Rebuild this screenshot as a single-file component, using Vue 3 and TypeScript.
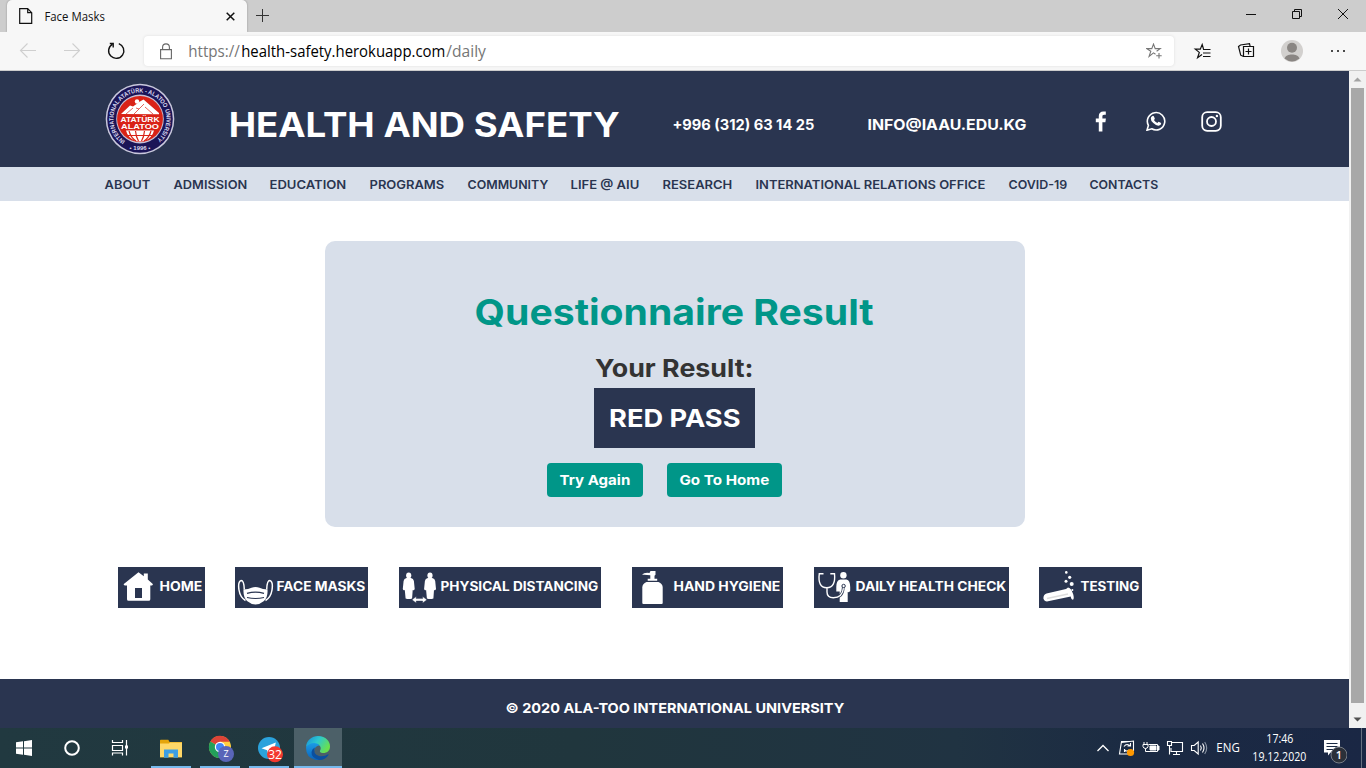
<script setup lang="ts">
import { h } from 'vue'

interface LabelProps {
  text: string
  w: number
  cap: number
  weight?: number
  ui?: boolean
}

// One-line label whose box is exactly as wide as its ink and as tall as its capitals.
const Label = (p: LabelProps) => {
  const size = p.cap / (p.ui ? 0.714 : 0.727)
  const side = size * (p.ui ? 0.05 : 0.04)
  return h('svg', { class: 'label', width: p.w, height: p.cap }, [
    h('text', {
      x: -side,
      y: p.cap,
      textLength: p.w + side * 1.5,
      lengthAdjust: 'spacingAndGlyphs',
      'font-size': size,
      'font-weight': p.weight ?? (p.ui ? 400 : 700),
      'font-family': p.ui ? '"Open Sans", "Noto Sans", sans-serif' : 'Inter, "Open Sans", sans-serif',
    }, p.text),
  ])
}
Label.props = { text: String, w: Number, cap: Number, weight: Number, ui: Boolean }

const nav: { text: string; w: number }[] = [
  { text: 'ABOUT', w: 45 },
  { text: 'ADMISSION', w: 73 },
  { text: 'EDUCATION', w: 76 },
  { text: 'PROGRAMS', w: 74 },
  { text: 'COMMUNITY', w: 80 },
  { text: 'LIFE @ AIU', w: 68 },
  { text: 'RESEARCH', w: 69 },
  { text: 'INTERNATIONAL RELATIONS OFFICE', w: 229 },
  { text: 'COVID-19', w: 58 },
  { text: 'CONTACTS', w: 68 },
]

const tiles: { id: string; text: string; w: number }[] = [
  { id: 'home', text: 'HOME', w: 42 },
  { id: 'mask', text: 'FACE MASKS', w: 88 },
  { id: 'distance', text: 'PHYSICAL DISTANCING', w: 157 },
  { id: 'hand', text: 'HAND HYGIENE', w: 106 },
  { id: 'daily', text: 'DAILY HEALTH CHECK', w: 150 },
  { id: 'test', text: 'TESTING', w: 58 },
]
</script>

<template>
  <div class="screen">
    <div class="tabstrip">
      <div class="tab">
        <svg class="doc" width="14" height="16" viewBox="0 0 14 16" fill="none" stroke="#111" stroke-width="1.2"><path d="M.7.7h8l4 4v10.6H.7zM8.7.7v4h4" /></svg>
        <Label text="Face Masks" :w="59.5" :cap="8.6" ui />
        <svg class="tabclose" width="9" height="9" viewBox="0 0 9 9" stroke="#111" stroke-width="1.5"><path d="M.7.7l7.6 7.6M8.3.7L.7 8.3" /></svg>
      </div>
      <svg class="plus" width="13" height="13" viewBox="0 0 13 13" stroke="#333"><path d="M6.5 0v13M0 6.5h13" /></svg>
      <div class="winctl">
        <svg width="46" height="30" viewBox="0 0 46 30" stroke="#111" fill="none"><path d="M18 14.5h10" /></svg>
        <svg width="46" height="30" viewBox="0 0 46 30" stroke="#111" fill="none"><path d="M18.500 11.500h7v7h-7zM20.500 11.500v-2h7v7h-2" /></svg>
        <svg width="46" height="30" viewBox="0 0 46 30" stroke="#111" fill="none"><path d="M18 9l10 10M28 9L18 19" /></svg>
      </div>
    </div>

    <div class="toolbar">
      <svg class="navs" width="144" height="38" viewBox="0 0 144 38" fill="none">
        <g stroke="#cfcfcf" stroke-width="1.1"><path d="M20.500 18.500h15.500M27.500 11.500l-7 7 7 7" /><path d="M64 18.500h15.500M72.500 11.500l7 7-7 7" /></g>
        <path d="M112.200 12.300a7.600 7.600 0 1 0 6.600-.7M109.800 11.500h3.400v4" stroke="#111" stroke-width="1.4" />
      </svg>
      <div class="address">
        <svg class="lock" width="12" height="17" viewBox="0 0 12 17" fill="none" stroke="#666" stroke-width="1.1"><path d="M.6 6.600h10.800v9.200H.6zM2.600 6.600V4.300a3.400 3.400 0 0 1 6.800 0v2.300" /></svg>
        <div class="url">
          <Label class="dim" text="https://" :w="50.500" :cap="11.300" ui />
          <Label text="health-safety.herokuapp.com" :w="203" :cap="11.300" ui />
          <Label class="dim" text="/daily" :w="38.500" :cap="11.300" ui />
        </div>
        <svg class="fav" width="17" height="16" viewBox="0 0 17 16" fill="none" stroke="#777" stroke-width="1.1"><path d="M9.500 11.200l-2-1.300-4.400 3.500 1.700-5.200L.8 5.600h5l1.700-4.500 1.700 4.500h5l-3.600 2.600M13 10v5.500M10.200 12.700h5.500" /></svg>
      </div>
      <svg class="tools" width="192" height="38" viewBox="0 0 192 38" fill="none" stroke="#111">
        <path d="M29.500 17l-1.300-4.500-1.900 4.700h-5l4 3.200-1.700 5.300 4.400-3.200M29 17.500h7.500M29 21h7.500M29 24.500h7.500" stroke-width="1.200" />
        <path d="M69.500 24.500l-2.800-1.300-2.200-8.700 2-1.500 9-1.300.7 3M69.500 14.500h10v10h-10zM74.500 16.500v6M71.500 19.500h6" stroke-width="1.200" />
        <circle cx="118" cy="19" r="11" fill="#d2d0ce" stroke="none" />
        <circle cx="118" cy="15.800" r="5" fill="#8a8683" stroke="none" />
        <path d="M110.500 26.500c1.500-5.500 13.500-5.500 15 0q-7.500 6-15 0z" fill="#8a8683" stroke="none" />
        <g fill="#111" stroke="none"><circle cx="158" cy="19" r="1" /><circle cx="164" cy="19" r="1" /><circle cx="170" cy="19" r="1" /></g>
      </svg>
    </div>

    <div class="viewport">
      <div class="page">
        <header>
          <svg class="seal" width="70" height="72" viewBox="-35 -36 70 72">
            <ellipse rx="34.300" ry="35.200" fill="#c9c8dc" />
            <ellipse rx="32.800" ry="33.700" fill="#1b1557" />
            <ellipse rx="23.800" ry="24.400" fill="#c8c0d4" />
            <circle r="22.900" fill="#d92216" />
            <path id="ring" d="M-14 22.500A26.500 26.500 0 1 1 14 22.500" fill="none" />
            <text class="ringtext" font-size="6.200"><textPath href="#ring" textLength="132" lengthAdjust="spacingAndGlyphs" startOffset="1">INTERNATIONAL ATATÜRK - ALATOO UNIVERSITY</textPath></text>
            <text class="ringtext" x="0" y="31.200" font-size="6" text-anchor="middle">• 1996 •</text>
            <g fill="#fff">
              <circle cx="-3" cy="-17.500" r="2.200" />
              <path d="M-19-5l9-8.500 3 1 7-5 3.500-2L19-6v1.200zM-14 11.500h28q-2 7.500-9 10-5 2-10 0-7-2.500-9-10" />
              <text class="sealtext" x="-19.500" y="2.700" textLength="39" lengthAdjust="spacingAndGlyphs" font-size="7.800">ATATÜRK</text>
              <text class="sealtext" x="-19" y="10.300" textLength="38" lengthAdjust="spacingAndGlyphs" font-size="7.800">ALATOO</text>
            </g>
            <path d="M-11 12q2 7 7 10M-4.500 12q.5 6 3 10M4.500 12q-.5 6-3 10M11 12q-2 7-7 10M-12 16.500h24" stroke="#d92216" stroke-width="1.200" fill="none" />
            <path d="M-14-5l7-6M-6-5l10-10M-4-11l3 1M5-12l8 7" stroke="#d92216" stroke-width=".7" />
          </svg>
          <Label class="brand" text="HEALTH AND SAFETY" :w="389" :cap="24.500" />
          <Label class="phone" text="+996 (312) 63 14 25" :w="141" :cap="10.500" />
          <Label class="mail" text="INFO@IAAU.EDU.KG" :w="158" :cap="10.500" />
          <div class="social">
            <svg width="12" height="21" viewBox="0 0 12 21" fill="#fff"><path d="M3.800 20.500v-9.300H.8V7.600h3V4.900C3.800 1.900 5.600.4 8.300.4h2.500v3.300H9.100C7.800 3.700 7.400 4.400 7.400 5.500v2.100h3.500l-.5 3.600h-3v9.300z" /></svg>
            <svg width="20" height="20" viewBox="0 0 20 20"><path d="M1 19.200l1.400-4.800A8.700 8.700 0 1 1 5.700 17.800z" fill="none" stroke="#fff" stroke-width="1.600" /><path d="M6.100 5.200q1-.8 1.700 0l1 2.200q.1.500-.9 1.600 1.300 2.200 3.500 3.100 1-1.300 1.300-1.300l2.400 1.200q.3 2.200-2.600 2.700-2.300.1-5.200-2.600-2.800-2.700-2.500-4.800.2-1.400 1.300-2.100z" fill="#fff" /></svg>
            <svg width="21" height="21" viewBox="0 0 21 21" fill="none" stroke="#fff" stroke-width="1.800"><rect x="1.200" y="1.200" width="18.600" height="18.600" rx="5" /><circle cx="10.500" cy="10.500" r="4.500" /><circle cx="15.900" cy="5" r="1.200" fill="#fff" stroke="none" /></svg>
          </div>
        </header>
        <nav>
          <Label v-for="n in nav" :key="n.text" :text="n.text" :w="n.w" :cap="8.700" :weight="600" />
        </nav>
        <main>
          <section class="card">
            <Label class="title" text="Questionnaire Result" :w="397" :cap="26" :weight="650" />
            <Label class="sub" text="Your Result:" :w="157" :cap="18" :weight="650" />
            <div class="pass"><Label text="RED PASS" :w="130" :cap="18" /></div>
            <div class="actions">
              <a class="btn again"><Label text="Try Again" :w="70" :cap="10" /></a>
              <a class="btn go"><Label text="Go To Home" :w="89" :cap="10" /></a>
            </div>
          </section>
          <div class="tiles">
            <a v-for="t in tiles" :key="t.id" class="tile">
              <svg width="42" height="41" viewBox="0 0 42 41" fill="#fff">
                <template v-if="t.id === 'home'">
                  <path d="M5.800 17L20.500 5.200l5.300 4V6.400h4v6L34.800 17q.4 1.200-1 1.600h-1.500v13.600q0 1.600-1.600 1.600H10.600Q9 33.800 9 32.200V18.600H7Q5.200 18.300 5.800 17z" />
                  <path d="M17 21h7v10h-7z" fill="#2a3550" />
                </template>
                <template v-else-if="t.id === 'mask'">
                  <path d="M9.300 22.500Q9 13.600 6.200 13.600 2.700 14.500 4 23q1.200 7.500 6.500 10.500M31.700 22.500q.3-8.900 3.100-8.900Q38.300 14.500 37 23q-1.200 7.500-6.500 10.500" fill="none" stroke="#fff" stroke-width="1.500" />
                  <path d="M8.500 22.500q5-.2 8-1.700 4-1.500 8 0 3 1.500 8 1.700.6 7.500-3.500 11.500-8.500 7-17 0-4-4-3.500-11.500z" />
                  <path d="M12 26.300q8.500-2.200 17 0M12 30.500q8.500 2 17 0" fill="none" stroke="#2a3550" stroke-width="1.200" />
                </template>
                <template v-else-if="t.id === 'distance'">
                  <g v-for="x in [0, 21.300]" :key="x" :transform="`translate(${x} 0)`">
                    <ellipse cx="9.700" cy="8.500" rx="2.600" ry="3" />
                    <path d="M7.500 11h4.400q2.600.6 3 3l.8 8q-.7 1.800-2 1l-.6 8.400q-3.400 1.400-6.500 0L5.800 23q-1.400.8-2-1l.8-8q.4-2.400 2.900-3z" />
                  </g>
                  <path d="M13 32.800l4.200-3.200v2h6.500v-2l4.200 3.200-4.200 3.200v-2h-6.500v2z" stroke="#2a3550" stroke-width=".4" />
                </template>
                <template v-else-if="t.id === 'hand'">
                  <path d="M10 7.800Q12 5.300 17.500 6l1-2h5v3.800l-1 1v3h2.700v2h-9.500v-2h2.600V8.300Q13 7.300 10 7.800z" />
                  <path d="M14.500 15h12q4.200 1.600 4.200 5.500V36q0 .9-1 .9H11.300q-1 0-1-.9V20.500q0-3.900 4.200-5.500z" />
                </template>
                <template v-else-if="t.id === 'daily'">
                  <circle cx="29.400" cy="8.200" r="3.200" />
                  <path d="M26.200 12.400h6.300q3.700.8 3.700 7.600v4q-.8 1.500-2.500 1v10h-8V24.500h-3.400V20q0-6.800 3.900-7.600z" />
                  <path d="M13 20.500V25q0 5.700 6.300 5.700 10 0 10-11" fill="none" stroke="#2a3550" stroke-width="2.600" />
                  <path d="M9.500 6.700H5.300Q3.500 20.500 12.700 20.700 21.900 20.500 20.500 6.700h-4.200M13 20.500V25q0 5.700 6.300 5.700 9.200 0 10.200-10" fill="none" stroke="#fff" stroke-width="1.400" />
                  <circle cx="29.600" cy="19" r="1.700" stroke="#2a3550" stroke-width="1" />
                </template>
                <template v-else>
                  <path d="M7.500 26.600L27 21.900l2-1.500q3 0 5.200 6.800 1.200 4.300-.2 5.600-1.700 0-2.300-3.300L9 34.300q-3.500.6-4.600-2.800Q4.300 27.800 7.500 26.600z" />
                  <path d="M8 31.500l21-4.600" stroke="#ddd" stroke-width="1.500" />
                  <circle cx="27.300" cy="5.400" r="1.300" /><circle cx="30.700" cy="10.300" r="1.600" /><circle cx="27" cy="14.300" r="1.500" /><circle cx="32.700" cy="17" r="2" /><circle cx="33.400" cy="23" r="1" />
                </template>
              </svg>
              <Label :text="t.text" :w="t.w" :cap="9.200" />
            </a>
          </div>
        </main>
        <footer><Label text="© 2020 ALA-TOO INTERNATIONAL UNIVERSITY" :w="338" :cap="9.800" /></footer>
      </div>
      <div class="scroll">
        <svg width="17" height="17" viewBox="0 0 17 17"><path d="M4.500 10.500l4-4 4 4z" fill="#a3a3a3" /></svg>
        <div class="thumb"></div>
        <svg width="17" height="17" viewBox="0 0 17 17"><path d="M4.500 6.500l4 4 4-4z" fill="#505050" /></svg>
      </div>
    </div>

    <div class="taskbar">
      <div class="task"><svg viewBox="0 0 48 40" fill="#fff"><path d="M16 14.300l7-1v6.200h-7zM24 13.200l8-1.200v7.500h-8zM16 20.500h7v6.200l-7-1zM24 20.500h8V28l-8-1.200z" /></svg></div>
      <div class="task"><svg viewBox="0 0 48 40"><circle cx="24" cy="20" r="6.800" fill="none" stroke="#fff" stroke-width="2" /></svg></div>
      <div class="task"><svg viewBox="0 0 48 40" fill="none" stroke="#fff" stroke-width="1.200"><path d="M16.500 12v2.500h10V12M16.500 27.500v-2.500h10v2.500M16.500 17.500h10v5h-10zM30.500 12v15.500" /><path d="M29 17.500h3v3h-3z" fill="#fff" stroke="none" /></svg></div>
      <div class="task open first">
        <svg viewBox="0 0 48 40"><path d="M13 12.500q0-.7.800-.7h7.500l1.300 2.200H35v15.300H13z" fill="#e5a50a" /><path d="M13 15.500h9l1-1H35v14.800H13z" fill="#ffd868" /><path d="M17 21.500h14v8.200h-4.500v-4.200h-5v4.200H17z" fill="#3d9ee3" /></svg>
      </div>
      <div class="task open">
        <svg viewBox="0 0 48 40"><circle cx="24" cy="19" r="11" fill="#ffcf3f" /><path d="M24 19L14.300 13.500A11 11 0 0 1 33.700 13.800H24z" fill="#dc4437" /><path d="M24 19l-9.700-5.500A11 11 0 0 0 23.500 30l4.500-8z" fill="#23a05a" /><circle cx="24" cy="19" r="5.200" fill="#fff" /><circle cx="24" cy="19" r="4" fill="#4286f5" /><circle cx="30" cy="26" r="8" fill="#5965b8" /><text x="30" y="29.300" class="badge z">Z</text></svg>
      </div>
      <div class="task open">
        <svg viewBox="0 0 48 40"><circle cx="24" cy="20" r="11" fill="#2ba2dc" /><path d="M16.500 20.200l14.300-5.700-2.600 12-3.600-2.700-1.800 1.800-.7-3.400z" fill="#fff" /><circle cx="30" cy="26.300" r="8" fill="#f3392f" /><text x="30" y="30.500" class="badge">32</text></svg>
      </div>
      <div class="task open active">
        <svg viewBox="0 0 48 40">
          <defs>
            <linearGradient id="sea" x1="0" y1="0" x2="1" y2=".5"><stop offset="0" stop-color="#168bdb" /><stop offset=".5" stop-color="#2cc8cf" /><stop offset="1" stop-color="#69e04f" /></linearGradient>
            <linearGradient id="deep" x1="0" y1="0" x2="0" y2="1"><stop offset="0" stop-color="#1b9be6" /><stop offset="1" stop-color="#0c62b8" /></linearGradient>
          </defs>
          <path d="M12 19C12.500 12 18 8 24 8c8 0 12 5.500 12 10.500 0 4.500-3.500 6.500-6.500 6.500-3.500 0-4-1.500-3.300-2.700 1.800-3-.7-6.300-5.200-6.300-4 0-7.500 1.500-9 3z" fill="url(#sea)" />
          <path d="M12 19.500q2.500-4.500 8.500-4.500 3.500.2 5 2.200-5 1-5.500 6 0 7 7.500 8.300-3 .9-6.500.2Q12 29.500 12 19.500z" fill="url(#deep)" />
          <path d="M20.800 19.500q-2.300 6.500 4.200 8.500 5 1 9.200-1.700.7 0 .3.700Q31 32.300 25 32q-8-2.500-7.500-8 .6-3.500 3.300-4.500z" fill="#0b4f9e" />
        </svg>
      </div>
      <div class="tray">
        <svg width="24" height="40" viewBox="0 0 24 40" fill="none" stroke="#fff" stroke-width="1.300"><path d="M6.500 23l5.500-5.500 5.500 5.500" /></svg>
        <svg width="24" height="40" viewBox="0 0 24 40" fill="none" stroke="#fff" stroke-width="1.100"><path d="M15 13.500H6.500L4.500 26H15M6.500 14.500l12-1.500v10" /><path d="M9 18.500q2-3 5-1.500l1 1M15.500 15v3h-3M14 22q-2.500 2-4.500 0M9.500 24v-3" /><circle cx="15.500" cy="24.500" r="3.600" fill="#ff9800" stroke="none" /></svg>
        <svg width="24" height="40" viewBox="0 0 24 40" fill="none" stroke="#fff"><path d="M5 14v3M8 14v3M4 16.500h5v2q-.5 2-2.500 2-2 0-2.500-2zM6.500 20.500V23.500h12v-7h-9" /><path d="M18.500 18h1.500v4h-1.500M11 18h6v4h-6z" fill="#fff" /></svg>
        <svg width="24" height="40" viewBox="0 0 24 40" fill="none" stroke="#fff" stroke-width="1.100"><path d="M9 14.500h10.500v9H8V20M13.500 23.500v3M10 26.500h7M4.500 13.500h4v4h-4zM6.500 17.500v9" /></svg>
        <svg width="24" height="40" viewBox="0 0 24 40" fill="none" stroke="#fff" stroke-width="1.100"><path d="M4.500 17.500h2.700l4-3.500v12l-4-3.500H4.500z" /><path d="M13.500 17.500q1.600 2.500 0 5M15.500 15.500q3 4.500 0 9" /><path d="M17.700 14q4 6 0 12" stroke="#8a95a5" /></svg>
        <Label class="lang" text="ENG" :w="22.500" :cap="9" ui />
        <div class="clock">
          <Label text="17:46" :w="26" :cap="9" ui />
          <Label text="19.12.2020" :w="53" :cap="9" ui />
        </div>
        <svg class="notes" width="28" height="40" viewBox="0 0 28 40"><path d="M5 12h16v12.500h-9.500L9 27.500v-3H5z" fill="#fff" /><path d="M7.500 15.500h11M7.500 18.500h11M7.500 21.500h7" stroke="#1c2b44" /><circle cx="20" cy="27" r="8" fill="#2b3039" stroke="#777d86" /><text x="20" y="31" class="badge one">1</text></svg>
        <div class="peek"></div>
      </div>
    </div>
  </div>
</template>

<style>
body { margin: 0; overflow: hidden; }
.label { display: block; flex: none; overflow: visible; fill: currentColor; }
</style>

<style scoped>
.screen { width: 1366px; height: 768px; display: flex; flex-direction: column; background: #fff; overflow: hidden; }
.screen svg { display: block; flex: none; }
.tabstrip { height: 32px; display: flex; background: #cdcdcd; padding-left: 7px; }
.tab { width: 240px; box-sizing: border-box; padding: 0 12px; display: flex; align-items: center; background: #f7f7f7; border-radius: 5px 5px 0 0; box-shadow: 0 0 2px #888; color: #111; }
.doc { margin-right: 11.500px; }
.tabclose { margin-left: auto; }
.plus { margin: 9px 0 0 9px; }
.winctl { margin-left: auto; display: flex; }
.toolbar { height: 38px; display: flex; background: #f7f7f7; border-bottom: 1px solid #ccc; position: relative; }
.address { width: 1030px; height: 30px; margin-top: 4px; border-radius: 4px; background: #fff; box-shadow: 0 0 3px #ddd; display: flex; align-items: center; box-sizing: border-box; padding: 0 11px 0 16px; color: #000; }
.lock { margin-right: 17px; }
.url { display: flex; gap: 2px; padding-top: 1px; }
.dim { color: #767676; }
.fav { margin-left: auto; }
.viewport { height: 657px; display: flex; }
.page { width: 1349px; display: flex; flex-direction: column; }
header { height: 96px; background: #2a3550; color: #fff; display: flex; padding-left: 105px; }
.seal { margin-top: 12px; }
.ringtext, .sealtext { font-family: "Liberation Sans", Arial, sans-serif; font-weight: 700; fill: #fff; }
.ringtext { fill: #dcdaf0; }
.brand { margin: 40.500px 0 0 55px; }
.phone { margin: 48px 0 0 54px; }
.mail { margin: 48px 0 0 54px; }
.social { display: flex; gap: 39px; margin: 39.500px 0 0 69px; align-items: center; height: 21px; }
.social svg + svg + svg { margin-left: -4px; }
nav { height: 34px; background: #d8dfea; color: #2a3550; display: flex; align-items: center; gap: 23.700px; padding-left: 105px; box-sizing: border-box; padding-top: 1px; }
main { flex: 1; padding-top: 40px; }
.card { width: 700px; height: 286px; margin-left: 325px; border-radius: 10px; background: #d8dfea; display: flex; flex-direction: column; align-items: center; }
.title { margin: 58px 1px 0 0; color: #009688; }
.sub { margin: 34px 1px 0 0; color: #333; }
.pass { margin: 11px 1px 0 0; width: 161px; height: 60px; background: #2a3550; color: #fff; display: flex; align-items: center; justify-content: center; }
.actions { display: flex; gap: 24px; margin: 15px 21px 0 0; color: #fff; }
.btn { height: 34px; border-radius: 4px; background: #009688; display: flex; align-items: center; justify-content: center; }
.again { width: 96px; }
.go { width: 115px; }
.tiles { display: grid; grid-template-columns: 117px 164px 233px 182px 225px 103px; margin: 40px 0 0 118px; }
.tile { justify-self: start; height: 41px; padding-right: 3px; background: #2a3550; color: #fff; display: flex; align-items: center; }
.tile .label { margin-bottom: 1.500px; }
footer { height: 49px; background: #2a3550; color: #fff; display: flex; justify-content: center; align-items: center; box-sizing: border-box; padding-top: 9px; }
.scroll { width: 17px; background: #f1f1f1; display: flex; flex-direction: column; }
.thumb { flex: 1; margin: 0 2px; background: #a8a8a8; }
.scroll svg:last-child { margin-top: 8px; }
.taskbar { height: 40px; display: flex; background: linear-gradient(90deg, #213940 0%, #20363d 42%, #203342 70%, #1b2a43 84%, #1a2744 100%); }
.task { width: 48px; height: 40px; margin-right: 1px; position: relative; }
.task:nth-child(-n+2) { margin-right: 0; }
.task:nth-child(3) { margin-right: 3px; }
.task svg { width: 48px; height: 40px; }
.open::after { content: ""; position: absolute; left: 4px; right: 4px; bottom: 0; height: 2px; background: #76b9ed; }
.active { background: #4c6068; }
.active::after { left: 0; right: 0; }
.badge { font: 12px "Open Sans", sans-serif; fill: #fff; text-anchor: middle; }
.z { font-size: 9px; }
.one { font-size: 11px; font-weight: 600; }
.tray { margin-left: auto; display: flex; color: #fff; }
.lang { margin: 15px 0 0 6.500px; }
.clock { display: flex; flex-direction: column; align-items: center; gap: 9px; padding-top: 6px; margin-left: 13.500px; }
.notes { margin-left: 13px; }
.peek { width: 4px; margin-left: 14px; border-left: 1px solid #667080; }
</style>
